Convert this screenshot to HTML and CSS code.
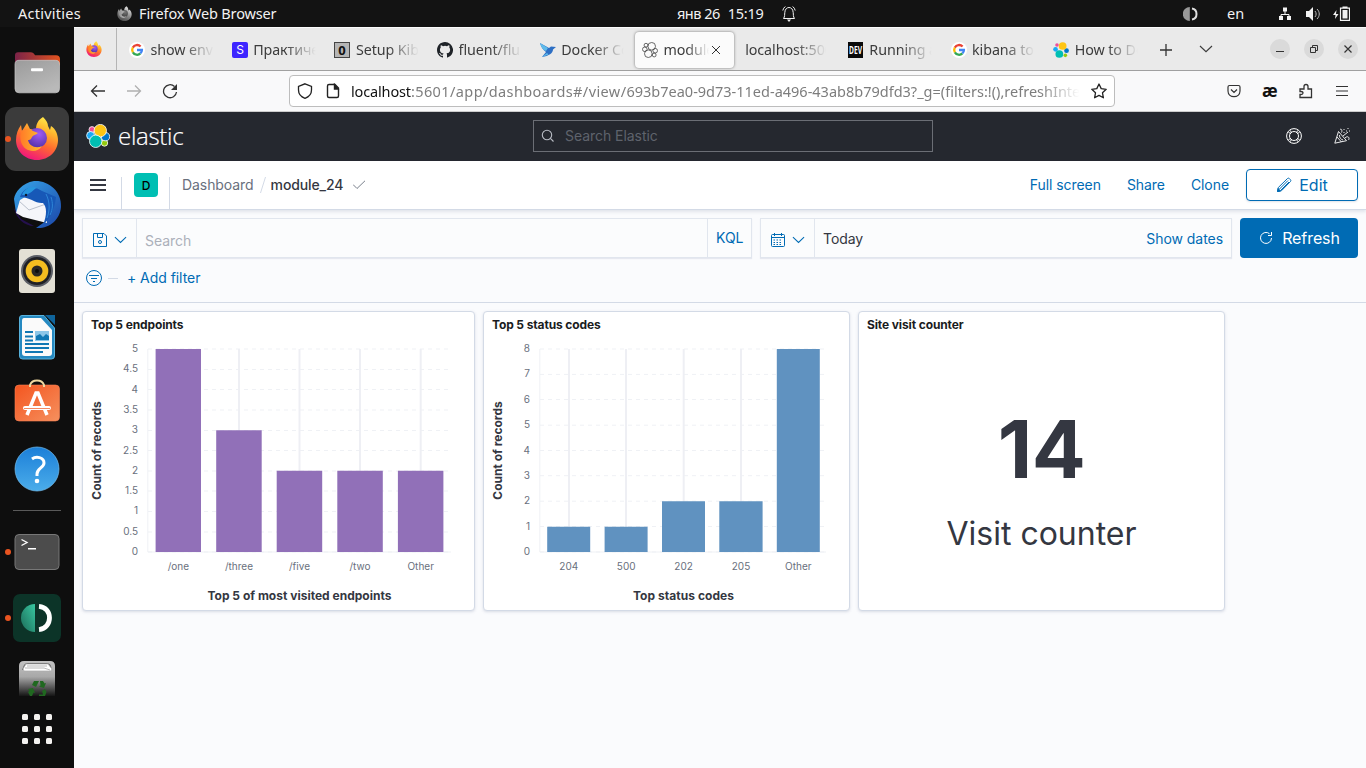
FILE: index.html
```html
<!DOCTYPE html>
<html lang="en">
<head>
<meta charset="utf-8">
<title>module_24 - Elastic</title>
<link rel="stylesheet" href="styles.css">
</head>
<body>
<svg class="defs" width="0" height="0">
  <defs>
    <linearGradient id="ffbody" x1=".8" y1="0" x2=".35" y2="1"><stop offset="0" stop-color="#fff44f"/><stop offset=".3" stop-color="#ffb52e"/><stop offset=".6" stop-color="#ff6a2f"/><stop offset="1" stop-color="#f0157d"/></linearGradient>
    <radialGradient id="ffglobe" cx=".6" cy=".3" r=".8"><stop offset="0" stop-color="#a15bf5"/><stop offset="1" stop-color="#4a2d9e"/></radialGradient>
    <linearGradient id="fforange"><stop offset="0" stop-color="#ff7a28"/><stop offset="1" stop-color="#ffbd2e"/></linearGradient>
    <linearGradient id="folder" x1="0" y1="0" x2=".6" y2="1"><stop offset="0" stop-color="#9b9b9b"/><stop offset="1" stop-color="#b9b9b9"/></linearGradient>
    <linearGradient id="folderback"><stop offset="0" stop-color="#7b2348"/><stop offset="1" stop-color="#e2531f"/></linearGradient>
    <linearGradient id="bird" x1="0" y1="0" x2="1" y2="1"><stop offset="0" stop-color="#37a6ea"/><stop offset="1" stop-color="#1b45a8"/></linearGradient>
    <linearGradient id="help" x1="0" y1="0" x2="0" y2="1"><stop offset="0" stop-color="#1c7fd8"/><stop offset="1" stop-color="#4badea"/></linearGradient>
    <linearGradient id="store" x1="0" y1="0" x2="1" y2="1"><stop offset="0" stop-color="#f4551f"/><stop offset="1" stop-color="#f5905e"/></linearGradient>
    <linearGradient id="green" x1="1" y1="0" x2="0" y2="1"><stop offset="0" stop-color="#38c7a0"/><stop offset="1" stop-color="#1c6b58"/></linearGradient>
    <linearGradient id="trash" x1="0" y1="0" x2="0" y2="1"><stop offset="0" stop-color="#c2c2c2"/><stop offset=".45" stop-color="#a8a8a8"/><stop offset="1" stop-color="#151515"/></linearGradient>
    <symbol id="firefox" viewBox="0 0 42 44">
      <path fill="url(#ffbody)" d="M27 1c3 3 5 6 5 9l2 4 1-4c5 3 7 9 7 14C42 35 33 44 21 44S0 35 0 24c0-6 2-11 5-15l1 6 5-8 3 6 6 1c0-6 2-10 7-13z"/>
      <circle cx="21" cy="22" r="10" fill="url(#ffglobe)"/>
      <path fill="url(#fforange)" d="M5 16c3-4 8-4 12-1l5 2c-2 2-5 2-6 4s-1 3-4 3c1 6 8 9 14 6-5 8-18 6-21-4-1-4-1-7 0-10z"/>
    </symbol>
    <symbol id="google" viewBox="0 0 16 16">
      <circle cx="8" cy="8" r="8" fill="#fff"/>
      <g fill="none" stroke-width="2.3"><path stroke="#ea4335" d="M3.8 5.6A4.8 4.8 0 0 1 11.6 4.6"/><path stroke="#fbbc05" d="M3.9 10.4a4.8 4.8 0 0 1-.1-4.8"/><path stroke="#34a853" d="M11.4 11.4a4.8 4.8 0 0 1-7.5-1"/><path stroke="#4285f4" d="M8 8h4.9c0 1.5-.6 2.7-1.5 3.4"/></g>
    </symbol>
    <symbol id="elastic" viewBox="0 0 24 24">
      <circle cx="6" cy="4.600" r="2.700" fill="#f04e98"/><circle cx="3.800" cy="11" r="3.500" fill="#1ba9f5"/><circle cx="18.500" cy="20" r="2.700" fill="#93c90e"/><circle cx="20.300" cy="13" r="3.600" fill="#07c"/><circle cx="14.500" cy="6" r="5.800" fill="#fec514"/><circle cx="9.500" cy="18" r="5.800" fill="#00bfb3"/>
    </symbol>
    <symbol id="chev" viewBox="0 0 14 8"><path fill="none" stroke="currentColor" stroke-width="1.15" d="M1 1l6 5.6L13 1"/></symbol>
  </defs>
</svg>
<div class="screen">
  <header class="topbar">
    <span class="activities">Activities</span>
    <svg class="app-icon" width="15" height="15"><use href="#firefox"/></svg>
    <span class="app-name">Firefox Web Browser</span>
    <span class="clock"><span class="date">янв 26</span><span class="time">15:19</span></span>
    <svg class="bell" width="14" height="18" viewBox="0 0 14 18" fill="none" stroke="#f2f2f2"><path d="M1.500 13.500c1.500-2 1-4 1.300-6C3 4 5 2.500 7 2.500s4 1.500 4.200 5c.3 2-.2 4 1.300 6zM.8 5.500q.5-2.500 2.500-4M13.200 5.500q-.5-2.500-2.500-4"/><path fill="#f2f2f2" stroke="none" d="M5 14.500h4l-2 2.500z"/></svg>
    <div class="tray">
      <svg width="16" height="16" viewBox="0 0 16 16"><path fill="#999" d="M6.800 1a7 7 0 0 0 0 14z"/><path fill="none" stroke="#dedede" stroke-width="2" d="M9 2.500c6 1 6 10 0 11"/></svg>
      <span class="lang">en</span>
      <svg class="net" width="16" height="16" viewBox="0 0 16 16"><path fill="#f2f2f2" d="M6 1.500h4v4H6zM2 10h4v4H2zM10 10h4v4h-4z"/><path fill="none" stroke="#f2f2f2" d="M8 5v3.500M4 11V8.500h8V11"/></svg>
      <svg class="vol" width="16" height="16" viewBox="0 0 16 16"><path fill="#f2f2f2" d="M1 5h3l4-4v14l-4-4H1z"/><path fill="none" stroke="#bbb" d="M10 5c1.500 2 1.500 4 0 6M12 3c3 3 3 7 0 10"/></svg>
      <svg class="bat" width="17" height="18" viewBox="0 0 17 18"><path fill="#f2f2f2" d="M3.500 5 0 10h2.500L2 14l3.500-5H3zM9.500 5h5v8.500h-5z"/><path fill="none" stroke="#f2f2f2" stroke-width="1.200" d="M7.500 3.100h9v12.300h-9z"/><path fill="#f2f2f2" d="M9.500 1.500h5v1.500h-5z"/></svg>
    </div>
  </header>
  <nav class="dock">
    <svg viewBox="0 40.700 74 66"><path fill="url(#folderback)" d="M15 64V56q0-3 3-3h13q2 0 3 1.500l1 1.500h21q4 0 4 4v6z"/><rect x="15" y="61" width="44.500" height="32.500" rx="4" fill="url(#folder)" stroke="#ccc" stroke-width=".7"/><rect x="31" y="69" width="12" height="3" rx="1" fill="#fff"/></svg>
    <svg viewBox="0 106 74 66"><rect x="5" y="107" width="64" height="64" rx="11" fill="#3b3b3b"/><circle cx="8" cy="139" r="3" fill="#e95420"/><use href="#firefox" x="16" y="116" width="42" height="44"/></svg>
    <svg viewBox="0 172 74 66"><path fill="url(#bird)" d="M14 199c1-7 8-16 20-18 14-1 28 10 27 26-1 13-12 22-25 21l10-7-20-4-7-8-3 4z"/><path fill="#24104d" d="M14 208l7 11 13 7c-10 0-18-8-20-18z"/><path fill="#f5f6fa" d="M16 213l4-13 5-3 19 4 3 3 0 19-24-6z"/><path fill="none" stroke="#b9c0cc" d="M19 201l10 9 17-6"/><path fill="#1758b7" d="M20 197c3-10 14-12 22-6l14 6c-1 11-6 22-13 28 4-10 4-18 0-22-7 1-13-6-23-6z"/><path fill="none" stroke="#2e86d8" d="M46 194c4 8 4 16 1 24M51 197c2 6 2 12-1 18"/><path fill="#2796df" d="M22 195c2-6 9-10 15-7-4 1-7 8-15 7z"/><circle cx="26" cy="195" r="1.200" fill="#101a2c"/></svg>
    <svg viewBox="0 238 74 66"><rect x="19" y="249" width="36" height="44" rx="3" fill="#e3e0d5"/><circle cx="37" cy="271" r="16" fill="#5b5e66"/><circle cx="37" cy="271" r="14" fill="#1f2025"/><circle cx="37" cy="271" r="11.300" fill="#f4bd20"/><circle cx="37" cy="271" r="5.500" fill="#2a2825"/><circle cx="37" cy="271" r="2" fill="#0d0d0d"/></svg>
    <svg viewBox="0 304 74 66"><path fill="#2589c1" stroke="#58b2dc" d="M22 315.500h22L54.500 328v28q0 3-3 3h-29q-3 0-3-3v-38q0-2.500 2.500-2.500z"/><path fill="#fafafa" d="M24 318h17l11 12v23q0 3-3 3H25q-3 0-3-3v-32q0-3 2-3z"/><path fill="#0f649b" d="M45 315h10v10z"/><path fill="none" stroke="#1178b4" stroke-width="2" d="M25 332h8M25 336.500h8M25 340.500h8M25 344h24M25 348h24M25 352h18"/><path fill="#8cc6e8" d="M35 331h14v10H35z"/><path fill="#1178b4" d="M36 340v-4l4-2 3 3 3-3 3 2v4z"/></svg>
    <svg viewBox="0 370 74 66"><rect x="15" y="385" width="44.500" height="36" rx="4" fill="url(#store)" stroke="#f78055" stroke-width=".6"/><path fill="none" stroke="#efd8a0" stroke-width="2" d="M30 387v-2c2-6 12-6 14 0v2"/><path fill="none" stroke="#fff" stroke-width="3.500" d="M27 415l9-22h2l9 22"/><path stroke="#fff" stroke-width="4" stroke-linecap="round" d="M25 408h24"/><path stroke="#f16c38" stroke-width=".8" d="M24 408.500h26"/></svg>
    <svg viewBox="0 436 74 66"><circle cx="37" cy="469" r="22" fill="url(#help)" stroke="#73bff0" stroke-width=".7"/><path fill="none" stroke="#fff" stroke-width="3" d="M32 459c4-3 12-2 12 4 0 5-7 5-7 11v2"/><circle cx="37" cy="481" r="2.300" fill="#fff"/></svg>
    <hr>
    <svg viewBox="0 519 74 66"><circle cx="8" cy="552" r="3" fill="#e95420"/><rect x="15" y="534.500" width="44" height="35" rx="4" fill="#4c4c4c" stroke="#777"/><path fill="none" stroke="#fff" stroke-width="1.400" d="M21.500 539.500l5.500 3-5.500 3M28 548.700h8"/></svg>
    <svg viewBox="0 585 74 66"><circle cx="8" cy="618" r="3" fill="#e95420"/><rect x="13" y="594" width="48" height="48" rx="7" fill="#0c3428"/><path fill="url(#green)" d="M35 604a14 14 0 0 0 0 28z"/><path fill="none" stroke="#fff" stroke-width="4.800" d="M39 606.300c14 1 14 22 0 23.300"/></svg>
    <svg class="trash" viewBox="0 651 74 45"><path fill="url(#trash)" d="M19 696v-30q0-5 5-5h26q5 0 5 5v30z"/><path fill="#666" d="M22 670l2-5q1-2 4-2h18q4 0 5 3l1 4z"/><path fill="#fff" stroke="#aaa" stroke-width=".7" d="M23 669l3-5h22l4 5-1 2H24z"/><path fill="none" stroke="#888" stroke-width=".6" d="M25 668h19l6 2M27 666h20"/><path fill="#206820" d="M34 681h5l-3 6-4-2zM40 681h3l1.500 2.500 1.500-.5-2 5-5-1.500 1.500-1zM28 689l5-1 2 5-1.500-.5-1.500 3.500h-2l-2-4 1.500-1zM42 691l3-2 1.500 3-1.500 4h-6v-1.500h4z"/></svg>
    <svg class="apps" viewBox="0 696 74 66" fill="#f4f2f0"><g id="dots"><rect x="22" y="714" width="6" height="6" rx="1.500"/><rect x="34" y="714" width="6" height="6" rx="1.500"/><rect x="46" y="714" width="6" height="6" rx="1.500"/></g><use href="#dots" y="12"/><use href="#dots" y="24"/></svg>
  </nav>
  <main class="window">
    <div class="tabs">
      <div class="pinned"><svg width="16" height="16"><use href="#firefox"/></svg></div>
      <div class="tab-list">
        <div class="tab"><svg class="fav" width="16" height="16"><use href="#google"/></svg><span>show env</span></div>
        <div class="tab"><svg class="fav" width="16" height="16"><rect width="16" height="16" rx="2" fill="#3d25ff"/><text x="8" y="12" class="fav-s">S</text></svg><span>Практиче</span></div>
        <div class="tab"><svg class="fav" width="16" height="16"><rect x=".5" y=".5" width="15" height="15" fill="#b5b5b5" stroke="#444"/><text x="8" y="12.700" class="fav-o">0</text></svg><span>Setup Kib</span></div>
        <div class="tab"><svg class="fav" width="16" height="16" viewBox="0 0 16 16"><path fill="#1f2328" d="M8 0C3.580 0 0 3.580 0 8c0 3.540 2.290 6.530 5.470 7.590.4.070.55-.17.55-.38 0-.19-.01-.82-.01-1.490-2.010.37-2.530-.49-2.690-.94-.09-.23-.48-.94-.82-1.130-.28-.15-.68-.52-.01-.53.63-.01 1.080.58 1.230.82.72 1.210 1.870.87 2.330.66.07-.52.28-.87.51-1.070-1.780-.2-3.640-.89-3.640-3.950 0-.87.31-1.590.82-2.150-.08-.2-.36-1.020.08-2.120 0 0 .67-.21 2.200.82a7.600 7.600 0 0 1 4 0c1.530-1.040 2.200-.82 2.200-.82.44 1.100.16 1.920.08 2.120.51.56.82 1.270.82 2.150 0 3.070-1.870 3.750-3.650 3.950.29.25.54.73.54 1.480 0 1.070-.01 1.930-.01 2.200 0 .21.15.46.55.38A8 8 0 0 0 8 0"/></svg><span>fluent/flu</span></div>
        <div class="tab"><svg class="fav" width="16" height="16"><path fill="#2d6fc4" d="M0 1l9 5 2-1.500L16 5l-3 2.500C13 11 9 14 2 15l4-5C3 8 1 5 0 1z"/><path fill="#5fbbea" d="M0 1l8 5-2 3C3 8 1 5 0 1zM2 15l5-4 1.500 1.500z"/></svg><span>Docker Co</span></div>
        <div class="tab active"><svg class="fav" width="16" height="16" viewBox="0 0 16 16" fill="none" stroke="#444" stroke-width=".8"><circle cx="9.700" cy="4.300" r="3.800"/><circle cx="6.300" cy="11.700" r="3.800"/><circle cx="2.800" cy="7.300" r="2.300"/><circle cx="13.200" cy="8.700" r="2.300"/><circle cx="12.200" cy="13" r="1.900"/><circle cx="4" cy="3.200" r="1.900"/></svg><span>module_24</span><svg class="close" width="10" height="10" viewBox="0 0 10 10" stroke="#333"><path d="M1 1l8 8M9 1L1 9"/></svg></div>
        <div class="tab"><span class="no-icon">localhost:5000</span></div>
        <div class="tab"><svg class="fav" width="16" height="16"><path fill="#0a0a0a" d="M0 0h15v16H0z"/><text x="7.500" y="12" class="fav-dev" textLength="13" lengthAdjust="spacingAndGlyphs">DEV</text></svg><span>Running a</span></div>
        <div class="tab"><svg class="fav" width="16" height="16"><use href="#google"/></svg><span>kibana to</span></div>
        <div class="tab"><svg class="fav" width="16" height="16"><use href="#elastic"/></svg><span>How to De</span></div>
      </div>
      <svg class="plus" width="12" height="12" stroke="#333" stroke-width="1.300"><path d="M6 0v12M0 6h12"/></svg>
      <svg class="all-tabs" width="14" height="8"><use href="#chev"/></svg>
      <div class="controls">
        <svg width="20" height="20"><path stroke="#333" d="M6 12.500h8"/></svg>
        <svg width="20" height="20" fill="none" stroke="#333"><path d="M6.500 8.500h5v5h-5zM8.500 8V6.500h5v5H12"/></svg>
        <svg width="20" height="20" stroke="#333" stroke-width="1.200"><path d="M6.500 6.500l7 7M13.500 6.500l-7 7"/></svg>
      </div>
    </div>
    <div class="toolbar">
      <svg width="16" height="16" viewBox="0 0 16 16" fill="none" stroke="#333" stroke-width="1.300"><path d="M15 8H1.500M7 2.500L1.500 8 7 13.500"/></svg>
      <svg width="16" height="16" viewBox="0 0 16 16" fill="none" stroke="#b0b0b0" stroke-width="1.300"><path d="M1 8h13.500M9 2.500L14.500 8 9 13.500"/></svg>
      <svg width="16" height="16" viewBox="0 0 16 16"><path fill="none" stroke="#333" stroke-width="1.300" d="M12.500 3.500A6.500 6.500 0 1 0 14.500 9"/><path fill="#333" d="M15 1v6H9z"/></svg>
      <div class="url">
        <svg width="16" height="16" viewBox="0 0 16 16" fill="none" stroke="#222" stroke-width="1.300"><path d="M8 .8L14.500 3.500V7c0 4-3 7-6.500 8.300C4.500 14 1.500 11 1.500 7V3.500z"/></svg>
        <svg width="16" height="16" viewBox="0 0 16 16" fill="none" stroke="#222" stroke-width="1.400"><path d="M10 1.500H4q-1.500 0-1.500 1.500v10q0 1.500 1.500 1.500h8q1.500 0 1.500-1.500V5z"/><path fill="#222" d="M9.500 1.500V6H13z"/></svg>
        <span class="address"><b>localhost</b><span class="path">:5601/app/dashboards#/view/</span>693b7ea0-9d73-11ed-a496-43ab8b79dfd3?_g=(filters:!(),refreshInterval</span>
        <svg width="16" height="16" viewBox="0 0 16 16" fill="none" stroke="#222" stroke-width="1.300" stroke-linejoin="round"><path d="M8 1l2.200 4.600 5 .7-3.700 3.500.9 5L8 12.400l-4.400 2.400.9-5L.8 6.300l5-.7z"/></svg>
      </div>
      <div class="tools">
        <svg width="16" height="16" viewBox="0 0 16 16" fill="none" stroke="#333" stroke-width="1.200"><path d="M3.500 2.500h9q1.500 0 1.500 1.500v4c0 7.500-12 7.500-12 0V4q0-1.500 1.500-1.500zM5 6.500l3 3 3-3"/></svg>
        <span class="ae">æ</span>
        <svg width="16" height="16" viewBox="0 0 16 16" fill="none" stroke="#333" stroke-width="1.300"><path d="M2 6h4V3.500q0-2 2-2t2 2V6h3.500v8.500H2v-3h1q2 0 2-1.500t-2-1.500H2z"/></svg>
        <svg width="16" height="16" viewBox="0 0 16 16" stroke="#333" stroke-width="1.200"><path d="M2 3.500h12M2 8h12M2 12.500h12"/></svg>
      </div>
    </div>
    <div class="kbn-header">
      <svg class="mark" width="24" height="24" viewBox="0 0 24 24" stroke="#fff" stroke-width=".8"><circle cx="6" cy="5.600" r="3" fill="#f04e98"/><circle cx="4.600" cy="11.500" r="4" fill="#1ba9f5"/><circle cx="18.500" cy="19" r="3.200" fill="#93c90e"/><circle cx="19.500" cy="12.700" r="4.100" fill="#07c"/><circle cx="14.300" cy="6.600" r="6.200" fill="#fec514"/><circle cx="9.700" cy="17.300" r="6.200" fill="#00bfb3"/></svg>
      <span class="wordmark">elastic</span>
      <div class="global-search"><svg width="14" height="14" viewBox="0 0 14 14" fill="none" stroke="#b8bcc4" stroke-width="1.100"><circle cx="6" cy="6" r="4.700"/><path d="M9.400 9.400L12.500 12.500"/></svg><span>Search Elastic</span></div>
      <div class="head-icons">
        <svg width="16" height="16" viewBox="0 0 16 16" fill="none" stroke="#fff"><circle cx="8" cy="8" r="7.400"/><circle cx="8" cy="8" r="4.500"/><path d="M2.500 4.500l2.500 1M4.500 2.500l1 2.500M13.500 4.500l-2.500 1M11.500 2.500l-1 2.500M2.500 11.500l2.500-1M4.500 13.500l1-2.500M13.500 11.500l-2.500-1M11.500 13.500l-1-2.500"/></svg>
        <svg width="16" height="16" viewBox="0 0 16 16" fill="none" stroke="#fff" stroke-width=".9"><path d="M.8 15.200L4.500 3.500l8 9.200zM3 9l4.500 5M5.500 7c0 3 1 4 3.500 5M6 1.500c1.500-1 2.500 1 1.500 3M9 8l5-4M11 10c3-3 5 0 3.500 2"/><path stroke-dasharray="1 2" d="M10 1v5M12 3h4M14 0v2"/></svg>
      </div>
    </div>
    <div class="breadcrumbs">
      <svg class="menu" width="16" height="13"><path fill="#343741" d="M0 0h16v2H0zM0 5h16v2H0zM0 10h16v2H0z"/></svg>
      <div class="space"><i>D</i></div>
      <span class="crumb">Dashboard</span><svg class="slash" width="6" height="16"><path stroke="#d3dae6" d="M5.500 0L.5 16"/></svg><span class="crumb current">module_24</span>
      <svg class="check" width="12" height="10" viewBox="0 0 12 10" fill="none" stroke="#69707d" stroke-width=".9"><path d="M0 4.500l4 4L12 .8"/></svg>
      <div class="actions"><a>Full screen</a><a>Share</a><a>Clone</a>
        <button class="edit"><svg width="16" height="16" viewBox="0 0 16 16" fill="none" stroke="#006bb4"><path d="M1.500 14.500l.8-4L11.500 1.500q1-.8 2 .2l.8.8q1 1 .2 2L5.500 13.700zM3.500 12L12 3.500M5 13l8-8"/><path fill="#006bb4" d="M1.500 14.500l.6-3 2.500 2.500z"/></svg>Edit</button>
      </div>
    </div>
    <div class="query">
      <div class="row">
        <div class="search-box">
          <div class="saved"><svg width="14" height="14" viewBox="0 0 14 14" fill="none" stroke="#006bb4"><path d="M.5.5h10.500L13.500 3v10.500H.5zM4.500.5v4h5v-4"/><circle cx="7" cy="9" r="1.500"/></svg><svg class="chev" width="13" height="8"><use href="#chev"/></svg></div>
          <span class="placeholder">Search</span><a class="kql">KQL</a>
        </div>
        <div class="date-box">
          <div class="saved"><svg width="14" height="14" viewBox="0 0 14 14" fill="none" stroke="#006bb4"><path d="M.5 2.500q0-1 1-1h11q1 0 1 1v10q0 1-1 1h-11q-1 0-1-1zM.5 4.500h13M3.500 0v3M10.500 0v3"/><path stroke-dasharray="1.500 1.500" d="M2.500 7h9M2.500 9.500h9M2.500 11.500h9"/></svg><svg class="chev" width="13" height="8"><use href="#chev"/></svg></div>
          <span class="today">Today</span><a class="show">Show dates</a>
        </div>
        <button class="refresh"><svg width="14" height="14" viewBox="0 0 14 14" fill="none" stroke="#fff"><path d="M10.500 2.700A5.500 5.500 0 1 0 12.500 7M12.500 1v3.500H9"/></svg>Refresh</button>
      </div>
      <div class="filters"><svg width="16" height="16" viewBox="0 0 16 16" fill="none" stroke="#006bb4"><circle cx="8" cy="8" r="7.500"/><path d="M3 5.500h10M5 8.500h6M7 11.500h2"/></svg><i></i><a>+ Add filter</a></div>
    </div>
    <div class="panels">
      <section class="panel p1"><h2>Top 5 endpoints</h2>
        <svg class="chart" width="391" height="270" viewBox="83 340 391 270">
          <path class="grid" d="M148 349H450M148 369.500H450M148 389.500H450M148 410H450M148 430.500H450M148 450.500H450M148 471H450M148 491H450M148 511.500H450M148 532H450M148 552H450"/>
          <path class="axis" d="M147.800 349V552H451"/>
          <path class="ticks" d="M239 349V552M299.500 349V552M360 349V552M420.700 349V552"/>
          <path fill="#9170b8" d="M155.600 349h45.400v203h-45.400zM216.200 430.200h45.500v121.800h-45.500zM276.700 470.800h45.500v81.200h-45.500zM337.300 470.800h45.500v81.200h-45.500zM397.900 470.800h45.500v81.200h-45.500z"/>
          <g class="ylab"><text x="138" y="352">5</text><text x="138" y="372.300">4.5</text><text x="138" y="393">4</text><text x="138" y="413">3.5</text><text x="138" y="433">3</text><text x="138" y="454">2.5</text><text x="138" y="474">2</text><text x="138" y="494">1.5</text><text x="138" y="514">1</text><text x="138" y="535">0.5</text><text x="138" y="555">0</text></g>
          <g class="xlab"><text x="178.300" y="570">/one</text><text x="239" y="570">/three</text><text x="299.500" y="570">/five</text><text x="360" y="570">/two</text><text x="420.700" y="570">Other</text></g>
          <text class="title" x="299.500" y="600" textLength="184">Top 5 of most visited endpoints</text>
          <text class="title" transform="translate(101 450.500) rotate(-90)" textLength="98.500">Count of records</text>
        </svg>
      </section>
      <section class="panel p2"><h2>Top 5 status codes</h2>
        <svg class="chart" width="365" height="270" viewBox="484 340 365 270">
          <path class="grid" d="M540 349H825M540 374.400H825M540 399.500H825M540 425.200H825M540 450.500H825M540 475.700H825M540 501.200H825M540 526.500H825M540 552H825"/>
          <path class="axis" d="M539.800 349V552H826"/>
          <path class="ticks" d="M569 349V552M626 349V552M683.700 349V552M741 349V552"/>
          <path fill="#6092c0" d="M547.200 526.700h43v25.300h-43zM604.600 526.700h43v25.300h-43zM662 501.300h43v50.700h-43zM719.300 501.300h43.300v50.700h-43.300zM776.800 349h43v203h-43z"/>
          <g class="ylab"><text x="530" y="352">8</text><text x="530" y="377">7</text><text x="530" y="403">6</text><text x="530" y="428">5</text><text x="530" y="454">4</text><text x="530" y="479">3</text><text x="530" y="504">2</text><text x="530" y="530">1</text><text x="530" y="555">0</text></g>
          <g class="xlab"><text x="568.800" y="570">204</text><text x="626.200" y="570">500</text><text x="683.600" y="570">202</text><text x="741" y="570">205</text><text x="798.300" y="570">Other</text></g>
          <text class="title" x="683.500" y="600" textLength="101">Top status codes</text>
          <text class="title" transform="translate(502 450.500) rotate(-90)" textLength="98.500">Count of records</text>
        </svg>
      </section>
      <section class="panel p3"><h2>Site visit counter</h2><div class="metric"><strong>14</strong><span>Visit counter</span></div></section>
    </div>
  </main>
</div>
</body>
</html>
```
FILE: styles.css
```css
* { box-sizing: border-box; }
body { margin: 0; background: #fafbfd; font-family: Inter, sans-serif; overflow: hidden; }
.defs { position: absolute; }
svg { display: block; flex: none; }
a { color: #006bb4; }
.screen { display: grid; width: 1366px; height: 768px; grid-template: 27px 741px / 74px 1292px; }

.topbar { grid-column: 1 / 3; background: #131313; color: #f2f2f2; display: flex; align-items: center; font: 14.5px/27px "Noto Sans", sans-serif; white-space: nowrap; }
.activities { margin-left: 18px; width: 99px; letter-spacing: .25px; }
.app-icon { filter: grayscale(1); margin-right: 7px; }
.app-name { width: 538px; letter-spacing: -.15px; }
.clock { width: 105px; display: flex; gap: 8px; }
.date { letter-spacing: -.5px; }
.time { letter-spacing: -.3px; }
.tray { margin-left: auto; display: flex; align-items: center; padding-right: 16px; }
.lang { margin: 0 34px 0 28px; width: 16px; }
.net { margin-right: 12px; }
.vol { margin-right: 12px; }

.dock { background: #0e0e0e; padding-top: 13px; }
.dock svg { width: 74px; height: 66px; }
.dock .trash { height: 45px; }
.dock hr { width: 48px; height: 1px; border: 0; margin: 8px 13px; background: #5a5a5a; }

.window { min-width: 0; background: #fafbfd; }
.tabs { height: 44px; display: flex; align-items: center; background: #eaeaea; border-top: 1px solid #fafafa; border-bottom: 1px solid #a0a0a0; color: #3c3c3c; font: 14.3px/20px "Noto Sans", sans-serif; }
.pinned { width: 43px; height: 42px; border-right: 1px solid #b5b5b5; display: flex; align-items: center; padding-left: 12px; }
.tab-list { display: flex; margin-left: 2px; padding-top: 1px; }
.tab { width: 102.700px; height: 36px; display: flex; align-items: center; padding-left: 10px; }
.tab span { margin-left: 5.500px; width: 64px; overflow: hidden; white-space: nowrap; letter-spacing: -.08px; padding-top: 1px; -webkit-mask-image: linear-gradient(90deg, #000 50%, transparent 98%); mask-image: linear-gradient(90deg, #000 50%, transparent 98%); }
.tab .no-icon { margin-left: 0; width: 83px; -webkit-mask-image: linear-gradient(90deg, #000 60%, transparent 98%); mask-image: linear-gradient(90deg, #000 60%, transparent 98%); }
.tab.active { width: 98.700px; margin: 0 1px 0 3px; padding-left: 7px; border-radius: 4px; background: #fbfbfb; box-shadow: 0 0 3px #777; }
.tab.active span { width: 47px; margin-left: 5px; }
.close { margin-left: 1px; }
.fav-s { fill: #fff; font: 12px Inter, sans-serif; text-anchor: middle; }
.fav-o { fill: #111; font: bold 13px "Noto Sans", sans-serif; text-anchor: middle; }
.fav-dev { fill: #fff; font: bold 10px "Noto Sans", sans-serif; text-anchor: middle; }
.plus { margin: 1px 0 0 14px; }
.all-tabs { margin-left: 27px; }
.controls { margin-left: auto; display: flex; gap: 14px; padding-right: 8px; }
.controls svg { background: #dadada; border-radius: 50%; width: 20px; }
.toolbar { height: 41px; display: flex; align-items: center; gap: 20px; padding-left: 16px; background: #f9f9fa; border-bottom: 1px solid #ccc; }
.url { margin-left: 91px; width: 826px; height: 32px; display: flex; align-items: center; background: #fff; border: 1px solid #bdbdbd; border-radius: 4px; padding: 0 7px; gap: 12px; }
.address { width: 736px; margin: 0 -4px 0 -2px; overflow: hidden; white-space: nowrap; color: #7d7d7d; font: 14.500px/24px "Noto Sans", sans-serif; -webkit-mask-image: linear-gradient(90deg, #000 94%, transparent 99.500%); mask-image: linear-gradient(90deg, #000 94%, transparent 99.500%); }
.address b { font-weight: 400; color: #111; letter-spacing: -.15px; }
.path { letter-spacing: .4px; }
.tools { margin-left: auto; display: flex; align-items: center; gap: 20px; padding-right: 16px; }
.ae { width: 16px; font: bold 17px/16px "Noto Sans", sans-serif; color: #111; letter-spacing: -1px; }

.kbn-header { height: 49px; background: #25282f; display: flex; align-items: center; padding: 0 16px 2px 12px; }
.wordmark { margin-left: 8px; width: 415px; padding-top: 1px; color: #fff; font: 300 24px/40px "Open Sans", sans-serif; letter-spacing: -.3px; -webkit-text-stroke: .2px #fff; }
.global-search { width: 400px; height: 32px; border: 1px solid #6b6e75; display: flex; align-items: center; padding-left: 7px; gap: 10px; color: #5f636c; font-size: 14px; letter-spacing: -.05px; }
.head-icons { margin-left: auto; display: flex; gap: 32px; }

.breadcrumbs { height: 49px; display: flex; align-items: center; padding: 0 8px 0 16px; background: #fff; border-bottom: 1px solid #d3dae6; box-shadow: 0 2px 3px rgba(100, 115, 145, .16); position: relative; font-size: 14px; letter-spacing: -.07px; }
.space { margin-left: 15px; width: 49px; height: 32px; align-self: flex-end; border: solid #d3dae6; border-width: 0 1px; padding-left: 12px; }
.space i { display: block; width: 24px; height: 24px; margin-top: -4px; border-radius: 4px; background: #00bfb3; text-align: center; color: #000; font: 500 12px/25px Inter, sans-serif; }
.crumb { margin-left: 12px; padding-bottom: 2px; color: #69707d; }
.slash { margin-left: 6px; }
.current { margin-left: 5px; color: #343741; font-weight: 500; letter-spacing: -.12px; }
.check { margin-left: 10px; }
.actions { margin-left: auto; display: flex; align-items: center; gap: 26px; }
.actions a { padding-bottom: 2px; }
.edit { margin-left: -9px; width: 112px; height: 32px; border: 1px solid #006bb4; border-radius: 4px; background: #fff; color: #006bb4; font: 16px Inter, sans-serif; display: flex; align-items: center; justify-content: center; gap: 7px; padding: 0; box-shadow: 0 1px 2px rgba(100, 115, 145, .2); }

.query { height: 93px; border-bottom: 1px solid #d3dae6; padding: 8px 8px 0; font-size: 14px; letter-spacing: -.05px; }
.row { display: flex; gap: 8px; height: 40px; align-items: flex-start; }
.search-box, .date-box { height: 40px; display: flex; align-items: center; border: 1px solid #e1e6ee; background: #fbfcfd; box-shadow: 0 1px 1px rgba(150, 160, 190, .2); }
.search-box { width: 670px; }
.date-box { width: 472px; }
.saved { width: 54px; height: 38px; border-right: 1px solid #e1e6ee; display: flex; align-items: center; gap: 7px; padding: 4px 0 0 10px; color: #006bb4; }
.placeholder { margin-left: 8px; padding-top: 5px; color: #abb0ba; flex: 1; }
.kql { height: 38px; width: 44px; border-left: 1px solid #e1e6ee; padding-left: 8px; line-height: 38px; }
.today { margin-left: 8px; color: #343741; flex: 1; }
.show { margin-right: 8px; }
.refresh { width: 118px; height: 40px; border: 0; border-radius: 4px; background: #006bb4; color: #fff; font: 16px Inter, sans-serif; display: flex; align-items: center; justify-content: center; gap: 9px; padding: 0 5px 0 6px; letter-spacing: -.08px; }
.filters { display: flex; align-items: center; height: 40px; padding-left: 4px; }
.filters i { width: 10px; height: 1px; background: #d3dae6; margin: 0 9px 0 6px; }
.filters a { padding-bottom: 1px; }

.panels { display: flex; gap: 8px; padding: 8px; }
.panel { height: 300px; background: #fff; border: 1px solid #d3dae6; border-radius: 4px; box-shadow: 0 1px 3px rgba(100, 115, 145, .22); overflow: hidden; }
.p1 { width: 393px; }
.p2, .p3 { width: 367px; }
.panel h2 { margin: 0; height: 28px; padding-left: 8px; font: 700 12px/26px Inter, sans-serif; letter-spacing: -.12px; color: #1a1c21; }
.grid { fill: none; stroke: #eff1f5; stroke-dasharray: 4 4; }
.axis { fill: none; stroke: #eff1f5; }
.ticks { stroke: #eeeff4; stroke-width: 2; }
.ylab, .xlab { font: 10px Inter, sans-serif; fill: #69707d; text-anchor: end; }
.xlab { text-anchor: middle; }
.title { font: 700 12px Inter, sans-serif; fill: #343741; text-anchor: middle; }
.metric { display: flex; flex-direction: column; align-items: center; padding-top: 59px; color: #343741; }
.metric strong { font: 700 80px/100px Inter, sans-serif; letter-spacing: -.5px; }
.metric span { font-size: 32px; line-height: 40px; margin-top: 15px; }
```
